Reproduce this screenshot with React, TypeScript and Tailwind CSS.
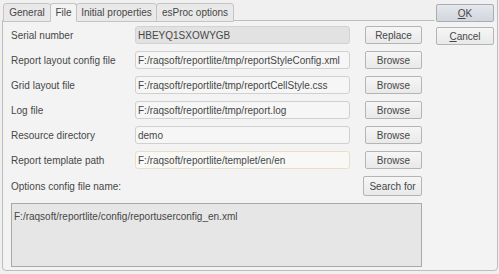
import React from "react";

const font = { fontFamily: '"Liberation Sans", Arial, sans-serif' };

function Btn({ children, w = "w-[57px]" }: { children: React.ReactNode; w?: string }) {
  return (
    <div
      className={`${w} h-[18px] flex items-center justify-center border border-[#b4b4b4] rounded-[2px] bg-gradient-to-b from-[#f6f6f6] to-[#e9e9e9] text-[10px] text-[#474747]`}
    >
      {children}
    </div>
  );
}

function Row({
  label,
  value,
  btn,
  disabled,
  focused,
}: {
  label: string;
  value: string;
  btn: string;
  disabled?: boolean;
  focused?: boolean;
}) {
  return (
    <div className="flex items-center h-[18px]">
      <div className="w-[124px] text-[10px] text-[#474747]">{label}</div>
      <div
        className={`w-[215px] h-[18px] flex items-center pl-[2px] text-[10px] text-[#474747] rounded-[3px] border ${
          disabled
            ? "bg-[#e2e2e2] border-[#d2d2d2]"
            : focused
            ? "bg-[#f8f8f6] border-[#eadfc6]"
            : "bg-[#f6f6f6] border-[#d0d0d0]"
        }`}
      >
        {value}
      </div>
      <div className="ml-[15px]">
        <Btn>{btn}</Btn>
      </div>
    </div>
  );
}

export default function App() {
  const tabs = ["General", "File", "Initial properties", "esProc options"];
  const widths = ["w-[48px]", "w-[27px]", "w-[81px]", "w-[78px]"];
  return (
    <div className="relative w-[499px] h-[274px] bg-[#f0f0f0] overflow-hidden" style={font}>
      <div className="flex pl-[3px] pt-[3px] h-[21px]">
        {tabs.map((t, i) => (
          <div
            key={t}
            className={`${widths[i]} h-[19px] -mr-px flex items-center justify-center text-[10px] text-[#474747] border border-[#c4c4c4] rounded-t-[3px] ${
              i === 1 ? "bg-[#f3f3f3] border-b-[#f3f3f3] relative z-10" : "bg-[#e9e9e9]"
            }`}
          >
            {t}
          </div>
        ))}
      </div>
      <div className="-mt-px ml-[2px] w-[496px] h-[251px] border border-[#bdbdbd] rounded-b-[4px] bg-[#f3f3f3] pl-[8px] pt-[5px]">
        <div className="flex flex-col gap-[7px]">
          <Row label="Serial number" value="HBEYQ1SXOWYGB" btn="Replace" disabled />
          <Row label="Report layout config file" value="F:/raqsoft/reportlite/tmp/reportStyleConfig.xml" btn="Browse" />
          <Row label="Grid layout file" value="F:/raqsoft/reportlite/tmp/reportCellStyle.css" btn="Browse" />
          <Row label="Log file" value="F:/raqsoft/reportlite/tmp/report.log" btn="Browse" />
          <Row label="Resource directory" value="demo" btn="Browse" />
          <Row label="Report template path" value="F:/raqsoft/reportlite/templet/en/en" btn="Browse" focused />
        </div>
        <div className="flex items-center justify-between w-[411px] mt-[7px] h-[20px]">
          <div className="text-[10px] text-[#474747]">Options config file name:</div>
          <div className="w-[59px] h-[20px] flex items-center justify-center border border-[#b4b4b4] rounded-[2px] bg-gradient-to-b from-[#f6f6f6] to-[#e9e9e9] text-[10px] text-[#474747]">
            Search for
          </div>
        </div>
        <div className="mt-[7px] w-[411px] h-[64px] border border-[#a9a9a9] bg-[#e6e6e6] pl-[2px] pt-[5px] text-[10px] text-[#474747]">
          F:/raqsoft/reportlite/config/reportuserconfig_en.xml
        </div>
      </div>
      <div className="absolute top-0 right-[1px] w-px h-[30px] bg-[#bdbdbd]" />
      <div className="absolute top-0 left-[434px] w-[63px] h-[22px] bg-[#f0f0f0] rounded-bl-[3px]" />
      <div className="absolute top-[4px] left-[436px] flex flex-col gap-[5px]">
        <div className="w-[58px] h-[18px] flex items-center justify-center border border-[#a8adb5] rounded-[2px] bg-gradient-to-b from-[#e4e7ec] to-[#d2d6dd] text-[10px] text-[#474747]">
          <span><span className="underline">O</span>K</span>
        </div>
        <div className="w-[58px] h-[18px] flex items-center justify-center border border-[#b4b4b4] rounded-[2px] bg-gradient-to-b from-[#f6f6f6] to-[#e9e9e9] text-[10px] text-[#474747]">
          <span><span className="underline">C</span>ancel</span>
        </div>
      </div>
    </div>
  );
}
